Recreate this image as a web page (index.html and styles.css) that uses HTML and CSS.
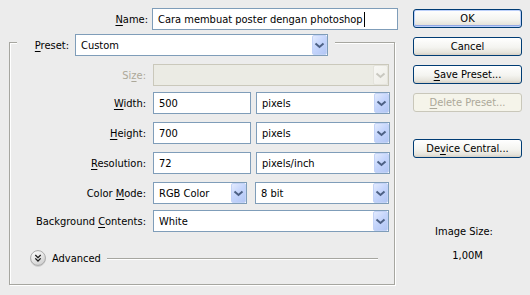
FILE: index.html
```html
<!DOCTYPE html>
<html>
<head>
<meta charset="utf-8">
<link rel="stylesheet" href="styles.css">
</head>
<body>
<div class="dialog">
  <div class="main">
    <div class="name-row">
      <label class="lbl-name"><u>N</u>ame:</label>
      <div class="field name-field">Cara membuat poster dengan photoshop<span class="caret"></span></div>
    </div>
    <div class="group">
      <div class="preset-row">
        <label class="lbl-preset"><u>P</u>reset:</label>
        <div class="select w-preset"><span class="val">Custom</span><span class="drop"><svg width="13" height="18" viewBox="0 0 13 18"><polyline points="2.5,7.5 6.5,11 10.5,7.5" /></svg></span></div>
      </div>
      <div class="row r-size">
        <label class="lbl disabled">Si<u>z</u>e:</label>
        <div class="select w-full is-disabled"><span class="val"></span><span class="drop"><svg width="13" height="18" viewBox="0 0 13 18"><polyline points="2.5,7.5 6.5,11 10.5,7.5" /></svg></span></div>
      </div>
      <div class="row r-6">
        <label class="lbl"><u>W</u>idth:</label>
        <div class="field w-num">500</div>
        <div class="select w-unit"><span class="val">pixels</span><span class="drop"><svg width="13" height="18" viewBox="0 0 13 18"><polyline points="2.5,7.5 6.5,11 10.5,7.5" /></svg></span></div>
      </div>
      <div class="row r-8">
        <label class="lbl"><u>H</u>eight:</label>
        <div class="field w-num">700</div>
        <div class="select w-unit"><span class="val">pixels</span><span class="drop"><svg width="13" height="18" viewBox="0 0 13 18"><polyline points="2.5,7.5 6.5,11 10.5,7.5" /></svg></span></div>
      </div>
      <div class="row r-8">
        <label class="lbl"><u>R</u>esolution:</label>
        <div class="field w-num">72</div>
        <div class="select w-unit"><span class="val">pixels/inch</span><span class="drop"><svg width="13" height="18" viewBox="0 0 13 18"><polyline points="2.5,7.5 6.5,11 10.5,7.5" /></svg></span></div>
      </div>
      <div class="row r-8">
        <label class="lbl">Color <u>M</u>ode:</label>
        <div class="select w-mode"><span class="val">RGB Color</span><span class="drop"><svg width="13" height="18" viewBox="0 0 13 18"><polyline points="2.5,7.5 6.5,11 10.5,7.5" /></svg></span></div>
        <div class="select w-unit"><span class="val">8 bit</span><span class="drop"><svg width="13" height="18" viewBox="0 0 13 18"><polyline points="2.5,7.5 6.5,11 10.5,7.5" /></svg></span></div>
      </div>
      <div class="row r-6">
        <label class="lbl">Background <u>C</u>ontents:</label>
        <div class="select w-full"><span class="val">White</span><span class="drop"><svg width="13" height="18" viewBox="0 0 13 18"><polyline points="2.5,7.5 6.5,11 10.5,7.5" /></svg></span></div>
      </div>
      <div class="advanced">
        <svg class="adv-icon" width="16" height="16" viewBox="0 0 16 16">
          <defs>
            <linearGradient id="ag" x1="0" y1="0" x2="0.6" y2="1">
              <stop offset="0" stop-color="#ffffff"/>
              <stop offset="1" stop-color="#d2d2d2"/>
            </linearGradient>
          </defs>
          <circle cx="8" cy="8" r="7.4" fill="url(#ag)" stroke="#a9a9a9" stroke-width="1"/>
          <polyline points="5.3,5 8,7.6 10.7,5" fill="none" stroke="#1a1a1a" stroke-width="1.3"/>
          <polyline points="5.3,8.4 8,11 10.7,8.4" fill="none" stroke="#1a1a1a" stroke-width="1.3"/>
        </svg>
        <span class="adv-text">Advanced</span>
        <span class="adv-line"></span>
      </div>
    </div>
  </div>
  <div class="side">
    <button class="btn default">OK</button>
    <button class="btn">Cancel</button>
    <button class="btn"><u>S</u>ave Preset...</button>
    <button class="btn is-disabled"><u>D</u>elete Preset...</button>
    <button class="btn b-device">De<u>v</u>ice Central...</button>
    <div class="info">
      <div class="info-label">Image Size:</div>
      <div class="info-value">1,00M</div>
    </div>
  </div>
</div>
</body>
</html>
```

FILE: styles.css
```css
* { box-sizing: border-box; }
html, body {
  margin: 0;
  padding: 0;
  background: #ececec;
}
body {
  font-family: "DejaVu Sans Condensed", "DejaVu Sans", sans-serif;
  font-size: 11px;
  color: #000;
  width: 530px;
  height: 295px;
  overflow: hidden;
}
u { text-decoration: underline; text-underline-offset: 2px; }

.dialog {
  display: flex;
  align-items: flex-start;
}
.main {
  width: 400px;
  padding-top: 8px;
}
.name-row {
  display: flex;
  align-items: center;
  gap: 4px;
  height: 22px;
}
.lbl-name {
  width: 148px;
  text-align: right;
}
.field {
  height: 22px;
  border: 1px solid #7f9db9;
  background: #fff;
  padding-left: 5px;
  display: flex;
  align-items: center;
  white-space: nowrap;
}
.name-field { width: 246px; }
.caret {
  display: inline-block;
  width: 1px;
  height: 15px;
  background: #000;
  margin-left: 1px;
}

.group {
  margin-top: 12px;
  margin-left: 9px;
  width: 386px;
  height: 243px;
  border: 1px solid #a6a6a0;
  box-shadow: inset 1px 1px 0 #fff, 1px 1px 0 #fff;
}
.preset-row {
  margin-top: -9px;
  margin-left: 7px;
  width: 318px;
  padding: 0 6px 0 15px;
  background: #ececec;
  display: flex;
  align-items: center;
  gap: 6px;
}
.lbl-preset {
  width: 37px;
  text-align: right;
  white-space: nowrap;
}

.row {
  display: flex;
  align-items: center;
  gap: 5px;
  height: 22px;
}
.r-size { margin-top: 8px; }
.r-6 { margin-top: 6px; }
.r-8 { margin-top: 8px; }
.lbl {
  width: 137px;
  padding-right: 1px;
  text-align: right;
  white-space: nowrap;
  margin-right: 1px;
}
.disabled { color: #aca899; }

.select {
  height: 22px;
  border: 1px solid #7f9db9;
  background: #fff;
  display: flex;
  align-items: stretch;
}
.select .val {
  flex: 1;
  padding-left: 5px;
  display: flex;
  align-items: center;
  white-space: nowrap;
  overflow: hidden;
}
.drop {
  width: 15px;
  border: 1px solid #c3d3f7;
  border-radius: 2px;
  background: linear-gradient(135deg, #e3ebfe 0%, #c6d6fc 45%, #b2c6f4 100%);
  display: flex;
  align-items: center;
  justify-content: center;
}
.drop svg polyline {
  fill: none;
  stroke: #4d6185;
  stroke-width: 2;
}
.select.is-disabled {
  border-color: #cac8bb;
  background: #ebebe4;
}
.select.is-disabled .drop {
  border-color: #e4e3dc;
  background: linear-gradient(135deg, #f7f7f4 0%, #eeede7 100%);
}
.select.is-disabled .drop svg polyline { stroke: #c9c8c0; }

.w-preset { width: 253px; }
.w-full { width: 236px; }
.w-num { width: 98px; }
.w-unit { width: 134px; }
.w-mode { width: 94px; }
.row .w-mode + .w-unit { margin-left: 3px; }

.advanced {
  margin-top: 18px;
  display: flex;
  align-items: center;
  height: 16px;
  padding-left: 20px;
  padding-right: 16px;
}
.adv-icon { flex: none; filter: drop-shadow(0 1px 0.5px rgba(0,0,0,0.12)); }
.adv-text { margin-left: 6px; }
.adv-line {
  flex: 1;
  margin-left: 6px;
  height: 2px;
  border-top: 1px solid #a6a6a0;
  border-bottom: 1px solid #fff;
  margin-top: 1px;
}

.side {
  margin-left: 13px;
  padding-top: 9px;
  width: 109px;
  display: flex;
  flex-direction: column;
}
.btn {
  font: inherit;
  color: #000;
  width: 109px;
  height: 19px;
  padding: 0;
  margin: 0 0 9px 0;
  border: 1px solid #003c74;
  border-radius: 3px;
  background: linear-gradient(180deg, #ffffff 0%, #f4f4f0 55%, #e6e4dc 85%, #d6d0c5 100%);
  display: flex;
  align-items: center;
  justify-content: center;
  line-height: 1;
}
.btn.default {
  box-shadow: inset 0 0 0 1px #bcd0fa, inset 0 -1px 0 1px #91a7e4;
}
.btn.is-disabled {
  border-color: #c9c7ba;
  background: #f5f4ea;
  color: #aca899;
}
.b-device { margin-top: 18px; }

.info {
  margin-top: 58px;
  text-align: center;
  line-height: 14px;
}
.info-label { padding-right: 7px; }
.info-value { margin-top: 10px; }
```
